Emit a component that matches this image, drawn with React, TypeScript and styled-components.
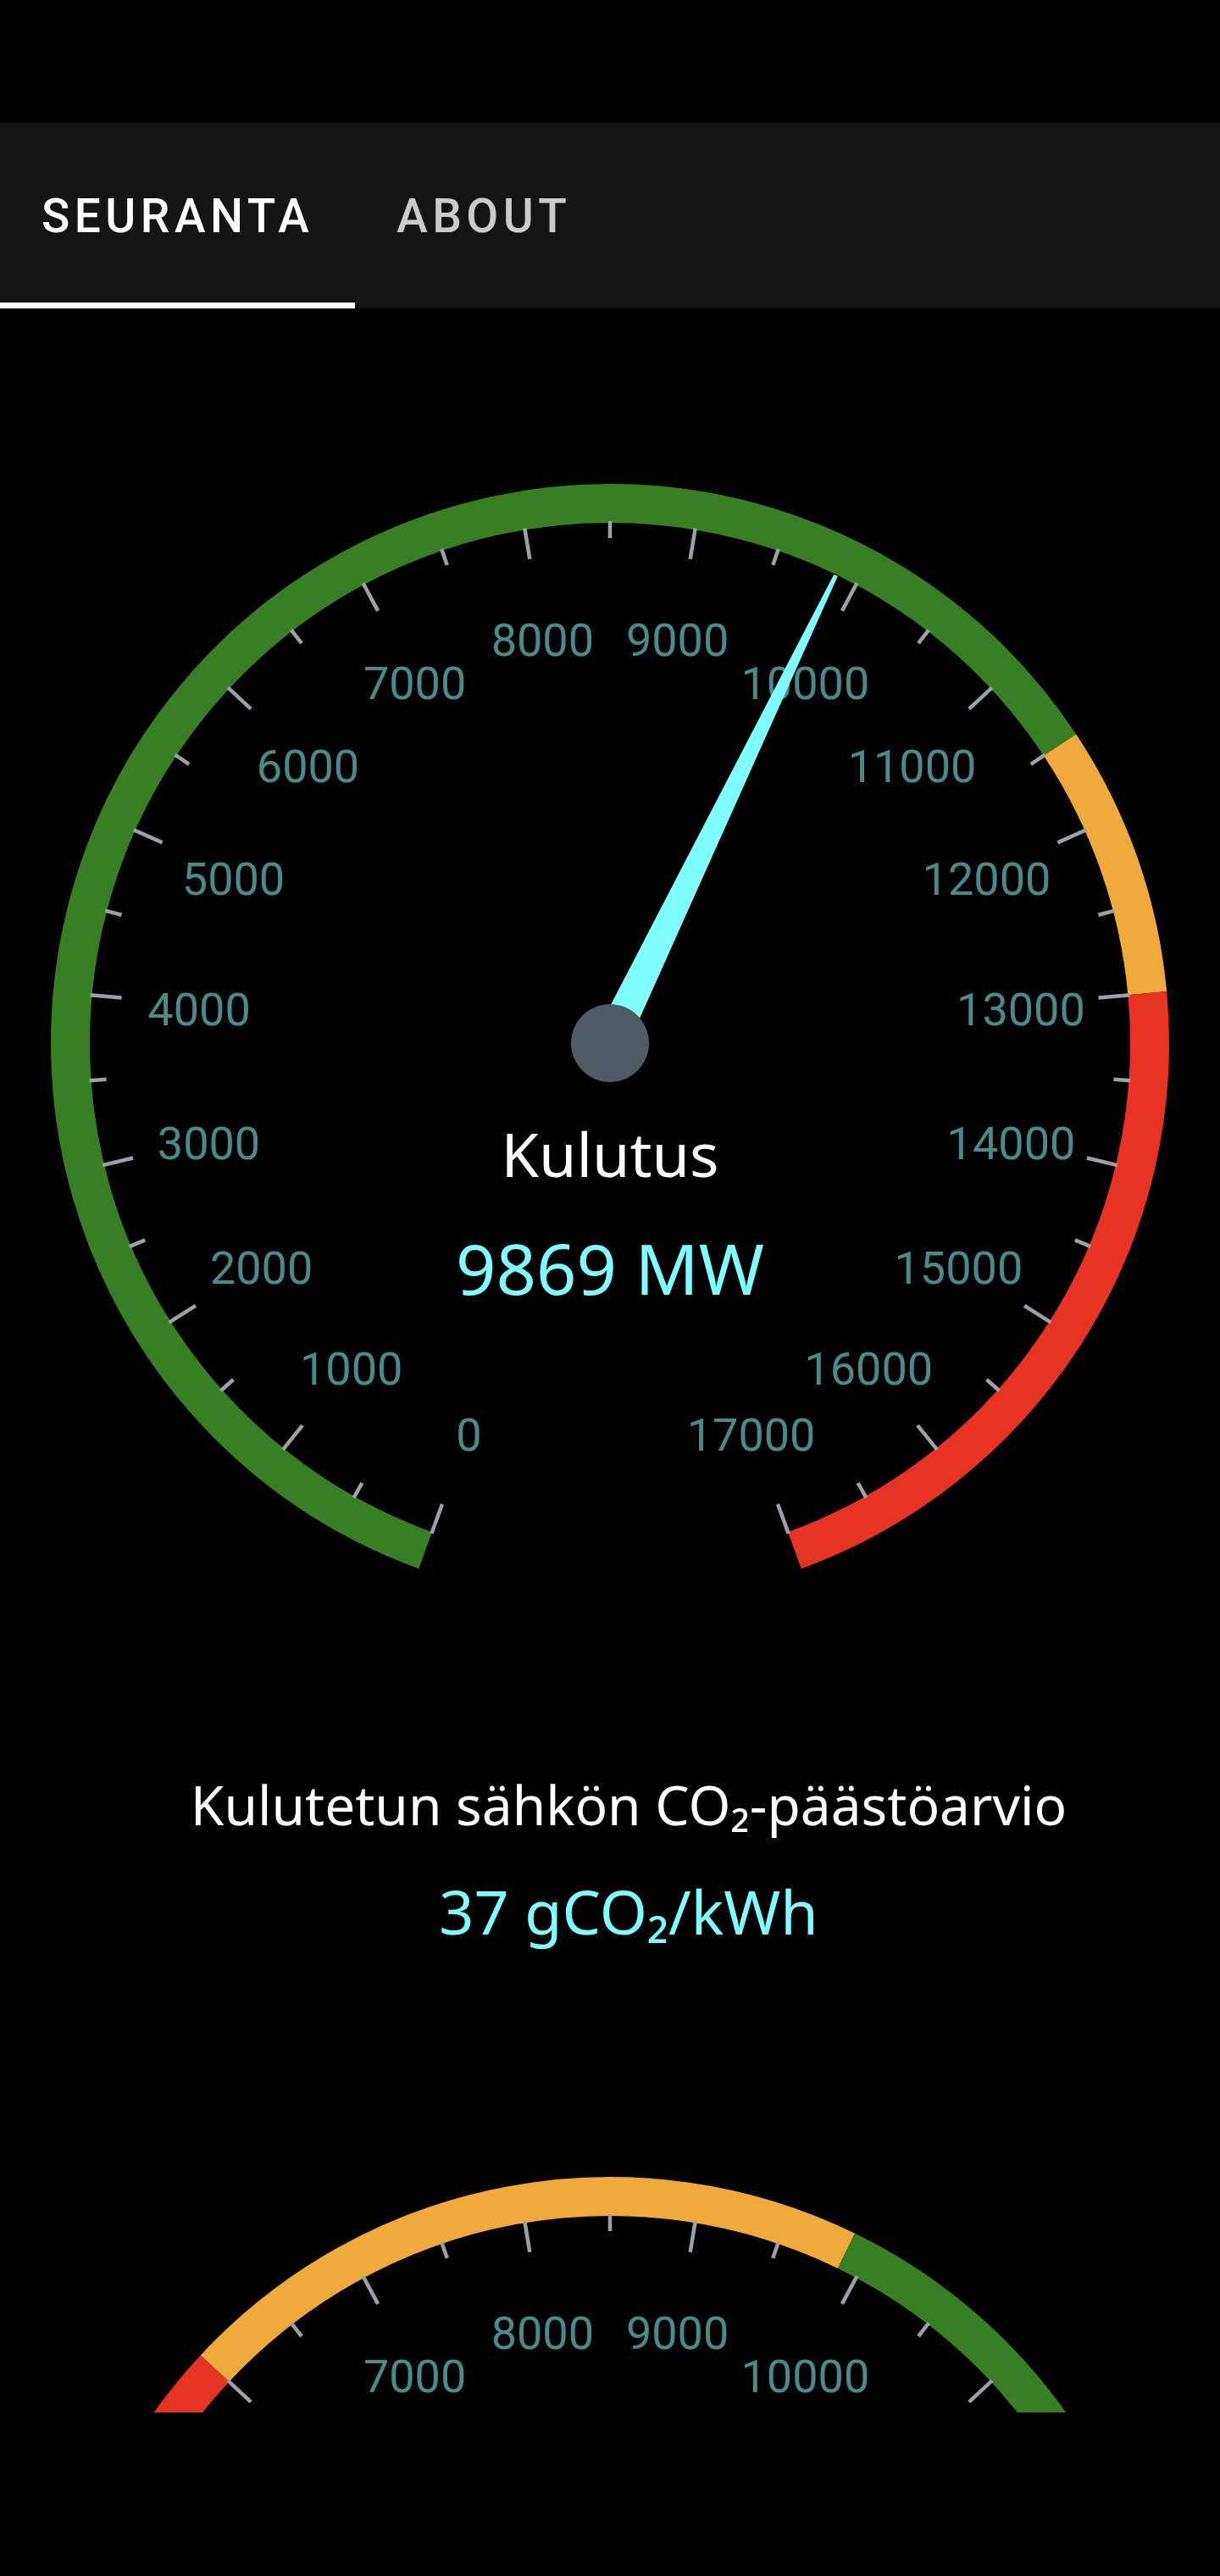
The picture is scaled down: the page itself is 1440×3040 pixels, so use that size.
import React from "react";
import styled, { createGlobalStyle } from "styled-components";

const GlobalStyle = createGlobalStyle`
  html, body {
    margin: 0;
    padding: 0;
    background: #000;
  }
  body {
    font-family: "Noto Sans", "Open Sans", sans-serif;
  }
`;

const Page = styled.div`
  width: 1440px;
  height: 3040px;
  background: #000;
  display: flex;
  flex-direction: column;
  overflow: hidden;
`;

const StatusArea = styled.div`
  height: 145px;
  flex: none;
  background: #000;
`;

const TabBar = styled.nav`
  height: 219px;
  flex: none;
  background: #141414;
  display: flex;
  align-items: stretch;
`;

const Tab = styled.button<{ $active?: boolean }>`
  position: relative;
  border: none;
  background: transparent;
  padding: 0 49px;
  margin: 0;
  font-family: Roboto, "Liberation Sans", sans-serif;
  font-weight: 500;
  font-size: 55px;
  letter-spacing: 5.5px;
  text-transform: uppercase;
  color: ${(p) => (p.$active ? "#ffffff" : "rgba(255,255,255,0.78)")};
  display: flex;
  align-items: center;
  cursor: pointer;

  &::after {
    content: "";
    position: absolute;
    left: 0;
    right: 0;
    bottom: 0;
    height: 7px;
    background: ${(p) => (p.$active ? "#ffffff" : "transparent")};
  }
`;

const Content = styled.main`
  height: 2483px;
  flex: none;
  overflow: hidden;
  display: flex;
  flex-direction: column;
  align-items: center;
`;

const BottomArea = styled.div`
  flex: 1;
  background: #000;
`;

const GaugeSvg = styled.svg<{ $offset: number }>`
  display: block;
  flex: none;
  margin-top: ${(p) => p.$offset}px;
`;

const EmissionBlock = styled.section`
  margin-top: 191px;
  padding-left: 44px;
  display: flex;
  flex-direction: column;
  align-items: center;
  gap: 43px;
`;

const EmissionTitle = styled.h2`
  margin: 0;
  font-family: "Noto Sans", "Open Sans", sans-serif;
  font-weight: 400;
  font-size: 64px;
  line-height: 1.2;
  color: #ffffff;
`;

const EmissionValue = styled.div`
  font-family: "Noto Sans", "Open Sans", sans-serif;
  font-weight: 400;
  font-size: 72px;
  line-height: 1.2;
  color: #80ffff;
`;

type Segment = { from: number; to: number; color: string };

const W = 1440;
const H = 1340;
const CX = 720;
const CY = 670;
const MAX = 17000;
const R_MID = 637;
const BAND = 46;
const R_IN = 614;

const angleOf = (v: number) => -160 + (v / MAX) * 320;
const pt = (r: number, deg: number) => {
  const a = (deg * Math.PI) / 180;
  return { x: CX + r * Math.sin(a), y: CY - r * Math.cos(a) };
};

const arcPath = (from: number, to: number) => {
  const a1 = angleOf(from);
  const a2 = angleOf(to);
  const p1 = pt(R_MID, a1);
  const p2 = pt(R_MID, a2);
  const large = a2 - a1 > 180 ? 1 : 0;
  return `M ${p1.x} ${p1.y} A ${R_MID} ${R_MID} 0 ${large} 1 ${p2.x} ${p2.y}`;
};

type GaugeProps = {
  offset: number;
  segments: Segment[];
  value: number;
  title?: string;
  valueText?: string;
};

const Gauge: React.FC<GaugeProps> = ({ offset, segments, value, title, valueText }) => {
  const ticks: React.ReactNode[] = [];
  for (let v = 0; v <= MAX; v += 500) {
    const major = v % 1000 === 0;
    const a = angleOf(v);
    const p1 = pt(R_IN + 2, a);
    const p2 = pt(major ? 579 : 596, a);
    ticks.push(
      <line
        key={`t${v}`}
        x1={p1.x}
        y1={p1.y}
        x2={p2.x}
        y2={p2.y}
        stroke="#9ba1a8"
        strokeWidth={4.5}
      />
    );
  }
  const labels: React.ReactNode[] = [];
  for (let v = 0; v <= MAX; v += 1000) {
    const p = pt(487, angleOf(v));
    labels.push(
      <text
        key={`l${v}`}
        x={p.x}
        y={p.y + 5}
        textAnchor="middle"
        dominantBaseline="central"
        fontFamily="Roboto, 'Liberation Sans', sans-serif"
        fontSize={54}
        fill="#4a8b8a"
      >
        {v}
      </text>
    );
  }
  const na = angleOf(value);
  const rot = `rotate(${na} ${CX} ${CY})`;
  return (
    <GaugeSvg $offset={offset} width={W} height={H} viewBox={`0 0 ${W} ${H}`}>
      {segments.map((s, i) => (
        <path
          key={i}
          d={arcPath(s.from, s.to)}
          fill="none"
          stroke={s.color}
          strokeWidth={BAND}
          strokeLinecap="butt"
        />
      ))}
      {ticks}
      {labels}
      <polygon
        points={`${CX - 20},${CY} ${CX + 20},${CY} ${CX + 2.5},${CY - 613} ${CX - 2.5},${CY - 613}`}
        fill="#80ffff"
        transform={rot}
      />
      <circle cx={CX} cy={CY} r={46} fill="#505b66" />
      {title && (
        <text
          x={CX}
          y={CY + 158}
          textAnchor="middle"
          fontFamily="'Noto Sans', 'Open Sans', sans-serif"
          fontSize={72}
          fill="#ffffff"
        >
          {title}
        </text>
      )}
      {valueText && (
        <text
          x={CX}
          y={CY + 297}
          textAnchor="middle"
          fontFamily="'Noto Sans', 'Open Sans', sans-serif"
          fontSize={83}
          fill="#80ffff"
        >
          {valueText}
        </text>
      )}
    </GaugeSvg>
  );
};

const GREEN = "#377f22";
const ORANGE = "#f0aa3c";
const RED = "#e63324";

export default function App() {
  return (
    <>
      <GlobalStyle />
      <Page>
        <StatusArea />
        <TabBar>
          <Tab $active>Seuranta</Tab>
          <Tab>About</Tab>
        </TabBar>
        <Content>
          <Gauge
            offset={197}
            value={9869}
            title="Kulutus"
            valueText="9869 MW"
            segments={[
              { from: 0, to: 11500, color: GREEN },
              { from: 11500, to: 13000, color: ORANGE },
              { from: 13000, to: 17000, color: RED },
            ]}
          />
          <EmissionBlock>
            <EmissionTitle>Kulutetun sähkön CO₂-päästöarvio</EmissionTitle>
            <EmissionValue>37 gCO₂/kWh</EmissionValue>
          </EmissionBlock>
          <Gauge
            offset={261}
            value={3500}
            segments={[
              { from: 0, to: 6000, color: RED },
              { from: 6000, to: 9880, color: ORANGE },
              { from: 9880, to: 17000, color: GREEN },
            ]}
          />
        </Content>
        <BottomArea />
      </Page>
    </>
  );
}
